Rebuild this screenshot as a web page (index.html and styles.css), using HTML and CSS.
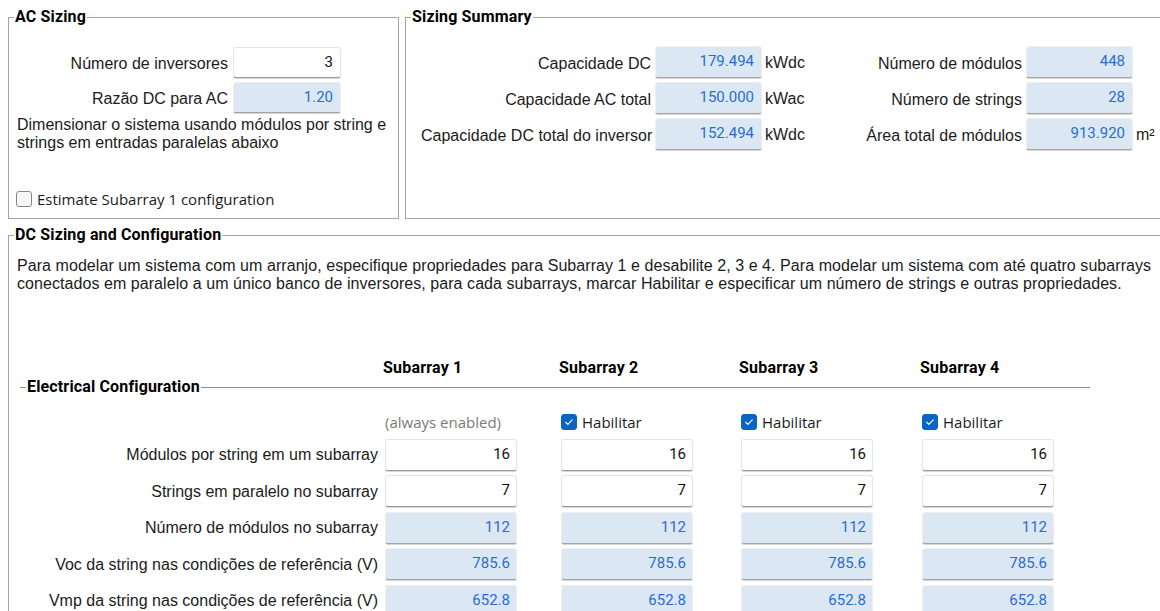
FILE: index.html
```html
<!DOCTYPE html>
<html lang="pt">
<head>
<meta charset="utf-8">
<title>System Design</title>
<link rel="stylesheet" href="styles.css">
</head>
<body>
<div class="page">
  <div class="top">
    <fieldset class="group ac">
      <legend>AC Sizing</legend>
      <div class="ac-body">
        <div class="ac-form">
          <label class="lbl">Número de inversores</label>
          <input class="field" type="text" value="3">
          <label class="lbl">Razão DC para AC</label>
          <input class="field calc" type="text" value="1.20" readonly>
        </div>
        <p class="note">Dimensionar o sistema usando módulos por string e<br>strings em entradas paralelas abaixo</p>
        <div class="check-row">
          <span class="box"></span>
          <span class="check-label">Estimate Subarray 1 configuration</span>
        </div>
      </div>
    </fieldset>

    <fieldset class="group summary">
      <legend>Sizing Summary</legend>
      <div class="sum-grid">
        <span class="lbl">Capacidade DC</span>
        <input class="field calc" type="text" value="179.494" readonly>
        <span class="unit">kWdc</span>
        <span class="lbl">Número de módulos</span>
        <input class="field calc" type="text" value="448" readonly>
        <span class="unit"></span>

        <span class="lbl">Capacidade AC total</span>
        <input class="field calc" type="text" value="150.000" readonly>
        <span class="unit">kWac</span>
        <span class="lbl">Número de strings</span>
        <input class="field calc" type="text" value="28" readonly>
        <span class="unit"></span>

        <span class="lbl">Capacidade DC total do inversor</span>
        <input class="field calc" type="text" value="152.494" readonly>
        <span class="unit">kWdc</span>
        <span class="lbl">Área total de módulos</span>
        <input class="field calc" type="text" value="913.920" readonly>
        <span class="unit">m²</span>
      </div>
    </fieldset>
  </div>

  <fieldset class="group dc">
    <legend>DC Sizing and Configuration</legend>
    <div class="dc-body">
      <p class="intro">Para modelar um sistema com um arranjo, especifique propriedades para Subarray 1 e desabilite 2, 3 e 4. Para modelar um sistema com até quatro subarrays<br>conectados em paralelo a um único banco de inversores, para cada subarrays, marcar Habilitar e especificar um número de strings e outras propriedades.</p>

      <div class="cols heads">
        <span></span>
        <span class="head">Subarray 1</span>
        <span class="head">Subarray 2</span>
        <span class="head">Subarray 3</span>
        <span class="head">Subarray 4</span>
      </div>

      <fieldset class="elec">
        <legend>Electrical Configuration</legend>
        <div class="cols rows">
          <span></span>
          <span class="muted">(always enabled)</span>
          <span class="check-row enable"><span class="box on"><svg viewBox="0 0 16 16"><path d="M4.2 8.3l2.5 2.4 5-5.2"/></svg></span><span class="check-label">Habilitar</span></span>
          <span class="check-row enable"><span class="box on"><svg viewBox="0 0 16 16"><path d="M4.2 8.3l2.5 2.4 5-5.2"/></svg></span><span class="check-label">Habilitar</span></span>
          <span class="check-row enable"><span class="box on"><svg viewBox="0 0 16 16"><path d="M4.2 8.3l2.5 2.4 5-5.2"/></svg></span><span class="check-label">Habilitar</span></span>

          <span class="lbl">Módulos por string em um subarray</span>
          <input class="field" type="text" value="16">
          <input class="field" type="text" value="16">
          <input class="field" type="text" value="16">
          <input class="field" type="text" value="16">

          <span class="lbl">Strings em paralelo no subarray</span>
          <input class="field" type="text" value="7">
          <input class="field" type="text" value="7">
          <input class="field" type="text" value="7">
          <input class="field" type="text" value="7">

          <span class="lbl">Número de módulos no subarray</span>
          <input class="field calc" type="text" value="112" readonly>
          <input class="field calc" type="text" value="112" readonly>
          <input class="field calc" type="text" value="112" readonly>
          <input class="field calc" type="text" value="112" readonly>

          <span class="lbl">Voc da string nas condições de referência (V)</span>
          <input class="field calc" type="text" value="785.6" readonly>
          <input class="field calc" type="text" value="785.6" readonly>
          <input class="field calc" type="text" value="785.6" readonly>
          <input class="field calc" type="text" value="785.6" readonly>

          <span class="lbl">Vmp da string nas condições de referência (V)</span>
          <input class="field calc" type="text" value="652.8" readonly>
          <input class="field calc" type="text" value="652.8" readonly>
          <input class="field calc" type="text" value="652.8" readonly>
          <input class="field calc" type="text" value="652.8" readonly>
        </div>
      </fieldset>
    </div>
  </fieldset>
</div>
</body>
</html>
```

FILE: styles.css
```css
* {
  box-sizing: border-box;
}

html,
body {
  margin: 0;
  background: #ffffff;
  overflow: hidden;
}

body {
  font-family: "Liberation Sans", Arial, sans-serif;
  font-size: 16px;
  color: #1b1b1b;
}

.page {
  width: 1185px;
  padding: 7px 0 0 8px;
}

/* group boxes */
.group {
  margin: 0;
  padding: 0;
  border: 1px solid #a4a4a4;
  min-width: 0;
}

legend {
  margin-left: 5px;
  padding: 0 1px;
  font: 700 16px/20px Roboto, "Liberation Sans", sans-serif;
  letter-spacing: 0.15px;
  color: #000;
}

.top {
  display: flex;
  gap: 6px;
  height: 212px;
}

.ac {
  width: 391px;
  flex: none;
}

.summary {
  flex: 1;
}

/* text boxes */
.field {
  display: block;
  width: 100%;
  height: 31px;
  margin: 0;
  padding: 0 7px 2px 4px;
  border: 1px solid #e4e4e4;
  border-bottom-color: #9c9c9c;
  border-radius: 3px;
  box-shadow: 0 1px 0 #d6d6d6;
  background: #ffffff;
  font: 15px Roboto, "Open Sans", sans-serif;
  color: #111;
  text-align: right;
  outline: none;
}

.field.calc {
  background: #dbe8f4;
  border-color: #eeeeee;
  border-bottom-color: #a4a4a4;
  color: #2c6cd0;
}

.lbl {
  text-align: right;
  white-space: nowrap;
}

/* AC sizing */
.ac-body {
  padding: 20px 8px 0;
}

.ac-form {
  display: grid;
  grid-template-columns: 211px 108px;
  column-gap: 5px;
  row-gap: 4px;
  align-items: center;
}

.ac-form .lbl {
  padding-top: 2px;
}

.note {
  margin: 3px 0 0;
  line-height: 18px;
}

.check-row {
  display: flex;
  align-items: center;
  gap: 5px;
  height: 18px;
}

.ac .check-row {
  margin: 38px 0 0 -1px;
}

.box {
  flex: none;
  width: 16px;
  height: 16px;
  border: 1px solid #858585;
  border-radius: 3px;
  background: #f6f6f6;
}

.box.on {
  border-color: #0a64c4;
  background: #0a64c4;
}

.box svg {
  display: block;
  width: 14px;
  height: 14px;
}

.box svg path {
  fill: none;
  stroke: #ffffff;
  stroke-width: 1.3;
  stroke-linecap: round;
  stroke-linejoin: round;
}

.check-label {
  font: 15px "Open Sans", "Noto Sans", sans-serif;
  color: #1b1b1b;
  white-space: nowrap;
}

/* sizing summary */
.sum-grid {
  display: grid;
  grid-template-columns: 234px 107px 98px 166px 107px auto;
  grid-auto-rows: 32px;
  row-gap: 4px;
  align-items: center;
  margin: 19px 0 0 15px;
}

.sum-grid .field {
  height: 32px;
}

.sum-grid .lbl {
  padding: 3px 4px 0 0;
}

.unit {
  padding: 2px 0 0 3px;
  white-space: nowrap;
}

/* DC sizing */
.dc {
  margin-top: 6px;
  height: 420px;
}

.dc-body {
  padding: 12px 8px 0;
}

.intro {
  margin: 0;
  line-height: 18px;
  letter-spacing: 0.06px;
  white-space: nowrap;
}

.cols {
  display: grid;
  grid-template-columns: 365px 176px 180px 181px 132px;
}

.heads {
  margin: 65px 0 0 3px;
  height: 20px;
  align-items: center;
}

.head {
  margin-left: -2px;
  font: 700 16px/20px Roboto, "Liberation Sans", sans-serif;
  letter-spacing: 0.2px;
  color: #000;
}

.elec {
  margin: 0 0 0 3px;
  padding: 0;
  width: 1070px;
  min-width: 0;
  border: 0;
  border-top: 1px solid #8c8c8c;
}

.elec legend {
  margin-left: 6px;
  line-height: 18px;
}

.rows {
  padding-top: 13px;
  grid-template-rows: 25px repeat(5, 32px);
  row-gap: 4.5px;
  align-items: center;
}

.rows .lbl {
  padding: 1px 7px 0 0;
}

.rows .field {
  width: 132px;
  height: 32px;
  padding-right: 6px;
}

.muted {
  font: 15px "Open Sans", "Noto Sans", sans-serif;
  color: #7a7a7a;
  white-space: nowrap;
}

.enable {
  height: 25px;
}
```
